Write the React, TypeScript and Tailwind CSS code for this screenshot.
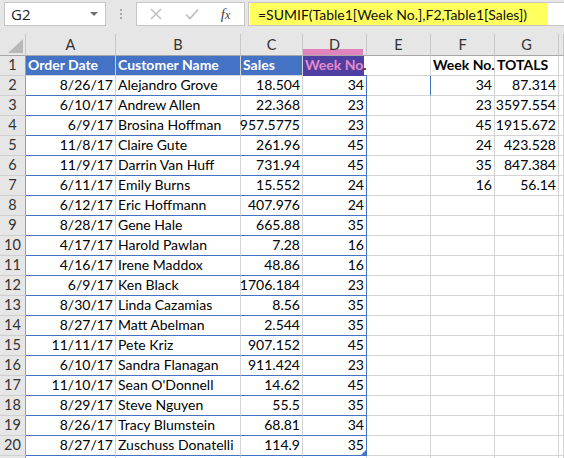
import React from "react";

const data: [string, string, string, string][] = [
  ["8/26/17", "Alejandro Grove", "18.504", "34"],
  ["6/10/17", "Andrew Allen", "22.368", "23"],
  ["6/9/17", "Brosina Hoffman", "957.5775", "23"],
  ["11/8/17", "Claire Gute", "261.96", "45"],
  ["11/9/17", "Darrin Van Huff", "731.94", "45"],
  ["6/11/17", "Emily Burns", "15.552", "24"],
  ["6/12/17", "Eric Hoffmann", "407.976", "24"],
  ["8/28/17", "Gene Hale", "665.88", "35"],
  ["4/17/17", "Harold Pawlan", "7.28", "16"],
  ["4/16/17", "Irene Maddox", "48.86", "16"],
  ["6/9/17", "Ken Black", "1706.184", "23"],
  ["8/30/17", "Linda Cazamias", "8.56", "35"],
  ["8/27/17", "Matt Abelman", "2.544", "35"],
  ["11/11/17", "Pete Kriz", "907.152", "45"],
  ["6/10/17", "Sandra Flanagan", "911.424", "23"],
  ["11/10/17", "Sean O'Donnell", "14.62", "45"],
  ["8/29/17", "Steve Nguyen", "55.5", "35"],
  ["8/26/17", "Tracy Blumstein", "68.81", "34"],
  ["8/27/17", "Zuschuss Donatelli", "114.9", "35"],
];

const summary: [string, string][] = [
  ["34", "87.314"],
  ["23", "3597.554"],
  ["45", "1915.672"],
  ["24", "423.528"],
  ["35", "847.384"],
  ["16", "56.14"],
];

const cols = ["A", "B", "C", "D", "E", "F", "G", ""];

function RowHeader({ n }: { n?: number }) {
  return (
    <div className="bg-[#e6e6e6] border-r border-b border-r-[#9f9f9f] border-b-[#d0d0d0] flex items-end justify-center pb-[1px] text-[14.5px] leading-[18px] text-[#333]">
      {n}
    </div>
  );
}

function Cell({
  children,
  right,
  className = "",
}: {
  children?: React.ReactNode;
  right?: boolean;
  className?: string;
}) {
  return (
    <div
      className={`border-r border-b border-[#d4d4d4] flex items-end pb-[1px] px-[2px] text-[14px] leading-[18px] text-black whitespace-nowrap ${
        right ? "justify-end" : "justify-start"
      } ${className}`}
    >
      {children}
    </div>
  );
}

export default function App() {
  return (
    <div className="w-[564px] h-[458px] overflow-hidden bg-white font-['Lato',sans-serif] select-none">
      {/* formula bar */}
      <div className="h-[34px] bg-[#e6e6e6] flex items-start pt-[2px] pl-[4px]">
        <div className="w-[102px] h-[24px] bg-white border border-[#c6c6c6] flex items-center justify-between pl-[6px] pr-[7px]">
          <span className="text-[15px] text-[#222] font-['Open_Sans',sans-serif] leading-none">G2</span>
          <svg width="8" height="5" viewBox="0 0 8 5">
            <path d="M0 0 L8 0 L4 4 Z" fill="#6f6f6f" />
          </svg>
        </div>
        <div className="w-[30px] h-[24px] flex flex-col items-center justify-center gap-[2px]">
          <div className="w-[2px] h-[2px] bg-[#a8a8a8]" />
          <div className="w-[2px] h-[2px] bg-[#a8a8a8]" />
          <div className="w-[2px] h-[2px] bg-[#a8a8a8]" />
        </div>
        <div className="w-[109px] h-[24px] bg-white border border-[#c6c6c6] flex items-center">
          <div className="w-[38px] flex justify-center">
            <svg width="12" height="12" viewBox="0 0 12 12">
              <path d="M1 1 L11 11 M11 1 L1 11" stroke="#bdbdbd" strokeWidth="1.4" />
            </svg>
          </div>
          <div className="w-[34px] flex justify-center">
            <svg width="14" height="12" viewBox="0 0 14 12">
              <path d="M1 6.5 L5 10.5 L13 1.5" stroke="#bdbdbd" strokeWidth="1.6" fill="none" />
            </svg>
          </div>
          <div className="flex-1 flex justify-center pr-[2px]">
            <span className="font-['Liberation_Serif',serif] italic text-[15px] text-[#444] leading-none">
              f<span className="text-[12px]">x</span>
            </span>
          </div>
        </div>
        <div className="ml-[3px] flex-1 h-[24px] bg-white border border-[#c6c6c6] border-r-0 flex items-center pl-[1px]">
          <div className="h-[22px] w-[297px] bg-[#ffff5e] flex items-center pl-[8px] text-[14px] text-[#111] whitespace-nowrap">
            =SUMIF(Table1[Week No.],F2,Table1[Sales])
          </div>
        </div>
      </div>

      {/* grid */}
      <div className="grid grid-cols-[26px_90px_125px_62px_64px_64px_64px_64px_1fr] grid-rows-[22px] auto-rows-[20px]">
        {/* corner */}
        <div className="bg-[#e6e6e6] border-r border-b border-r-[#c8c8c8] border-b-[#a6a6a6] relative">
          <svg className="absolute left-[8px] top-[5px]" width="15" height="14" viewBox="0 0 15 14">
            <path d="M15 0 L15 14 L0 14 Z" fill="#b8b8b8" />
          </svg>
        </div>
        {cols.map((c, i) => (
          <div
            key={i}
            className="bg-[#e6e6e6] border-r border-b border-r-[#c8c8c8] border-b-[#a6a6a6] relative flex items-center justify-center text-[14.5px] text-[#333] pt-[1px]"
          >
            {c === "D" && <div className="absolute left-0 right-[3px] bottom-0 h-[6px] bg-[#e183bc]" />}
            <span className="relative">{c}</span>
          </div>
        ))}

        {/* row 1 */}
        <RowHeader n={1} />
        <Cell className="bg-[#4472c4] border-[#4472c4] text-white font-bold">Order Date</Cell>
        <Cell className="bg-[#4472c4] border-[#4472c4] text-white font-bold">Customer Name</Cell>
        <Cell className="bg-[#4472c4] border-[#4472c4] text-white font-bold">Sales</Cell>
        <div className="border-b border-b-[#4472c4] relative">
          <div className="absolute left-0 top-0 bottom-[-1px] w-[61px] bg-[#4f3fa2]" />
          <div className="relative h-full flex items-end pb-[1px] pl-[2px] text-[14px] leading-[18px] font-bold whitespace-nowrap">
            <span className="text-[#e68bc7]">Week No</span>
            <span className="text-[#333]">.</span>
          </div>
        </div>
        <Cell />
        <Cell className="font-bold">Week No.</Cell>
        <Cell className="font-bold">TOTALS</Cell>
        <Cell />

        {data.map((r, i) => {
          const s = summary[i];
          const last = i === data.length - 1;
          return (
            <React.Fragment key={i}>
              <RowHeader n={i + 2} />
              <Cell right className="border-b-[#4472c4]">{r[0]}</Cell>
              <Cell className="border-b-[#4472c4]">{r[1]}</Cell>
              <Cell right className="border-b-[#4472c4]">{r[2]}</Cell>
              <Cell right className="border-b-[#4472c4] border-r-[#4472c4] relative">
                {r[3]}
                {last && (
                  <svg className="absolute right-0 bottom-0" width="5" height="5" viewBox="0 0 5 5">
                    <path d="M5 0 L5 5 L0 5 Z" fill="#4472c4" />
                  </svg>
                )}
              </Cell>
              <Cell className={i === 0 ? "border-r-[#4472c4]" : ""} />
              <Cell right>{s ? s[0] : ""}</Cell>
              <Cell right>{s ? s[1] : ""}</Cell>
              <Cell />
            </React.Fragment>
          );
        })}
        <RowHeader />
        <Cell />
        <Cell />
        <Cell />
        <Cell />
        <Cell />
        <Cell />
        <Cell />
        <Cell />
      </div>
    </div>
  );
}
